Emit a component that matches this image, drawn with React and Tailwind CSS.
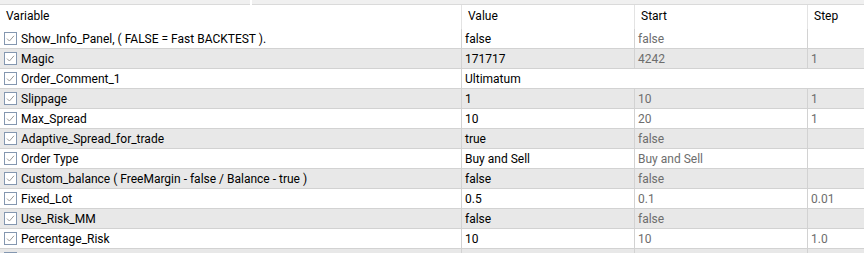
const rows = [
  { name: "Show_Info_Panel, ( FALSE = Fast BACKTEST ).", value: "false", start: "false", step: "" },
  { name: "Magic", value: "171717", start: "4242", step: "1" },
  { name: "Order_Comment_1", value: "Ultimatum", span: true },
  { name: "Slippage", value: "1", start: "10", step: "1" },
  { name: "Max_Spread", value: "10", start: "20", step: "1" },
  { name: "Adaptive_Spread_for_trade", value: "true", start: "false", step: "" },
  { name: "Order Type", value: "Buy and Sell", start: "Buy and Sell", step: "" },
  { name: "Custom_balance ( FreeMargin - false / Balance - true )", value: "false", start: "false", step: "" },
  { name: "Fixed_Lot", value: "0.5", start: "0.1", step: "0.01" },
  { name: "Use_Risk_MM", value: "false", start: "false", step: "" },
  { name: "Percentage_Risk", value: "10", start: "10", step: "1.0" },
  { name: "", value: "", start: "", step: "" },
];

function Check() {
  return (
    <span className="w-[13px] h-[13px] border border-[#8497b0] bg-white flex items-center justify-center shrink-0">
      <svg width="9" height="9" viewBox="0 0 9 9">
        <path d="M1 4.6 L3.4 7 L8 1.8" fill="none" stroke="#9a9a9a" strokeWidth="1" />
      </svg>
    </span>
  );
}

function Row({ row, index }) {
  const bg = index % 2 === 1 ? "bg-[#e8e8e8]" : "bg-white";
  return (
    <div className={`flex h-[20px] border-b border-[#d2d2d2] ${bg}`}>
      <div className="w-[461px] shrink-0 flex items-center pl-[4px] gap-[4px]">
        <Check />
        <span className="text-black whitespace-nowrap">{row.name}</span>
      </div>
      {row.span ? (
        <div className="flex-1 border-l border-[#d2d2d2] pl-[3px] flex items-center text-black">
          {row.value}
        </div>
      ) : (
        <>
          <div className="w-[173px] shrink-0 border-l border-[#d2d2d2] pl-[3px] flex items-center text-black">
            {row.value}
          </div>
          <div className="w-[173px] shrink-0 border-l border-[#d2d2d2] pl-[3px] flex items-center text-[#6d6d6d]">
            {row.start}
          </div>
          <div className="flex-1 border-l border-[#d2d2d2] pl-[3px] flex items-center text-[#6d6d6d]">
            {row.step}
          </div>
        </>
      )}
    </div>
  );
}

export default function App() {
  return (
    <div className="w-[864px] h-[253px] overflow-hidden bg-white text-[12px] leading-none font-['Roboto','Liberation_Sans',sans-serif]">
      <div className="flex h-[5px]">
        <div className="w-[250px] bg-[#f0f0f0] border-b border-[#dadada]" />
        <div className="w-[2px] bg-white" />
        <div className="flex-1 bg-[#f0f0f0] border-b border-[#dadada]" />
      </div>
      <div className="flex h-[24px] bg-white">
        <div className="w-[461px] shrink-0 flex items-center pl-[6px] pb-[2px]">Variable</div>
        <div className="w-[173px] shrink-0 border-l border-[#e3e3e3] pl-[6px] flex items-center pb-[2px]">Value</div>
        <div className="w-[173px] shrink-0 border-l border-[#e3e3e3] pl-[6px] flex items-center pb-[2px]">Start</div>
        <div className="flex-1 border-l border-[#e3e3e3] pl-[6px] flex items-center pb-[2px]">Step</div>
      </div>
      {rows.map((row, i) => (
        <Row key={i} row={row} index={i} />
      ))}
    </div>
  );
}
